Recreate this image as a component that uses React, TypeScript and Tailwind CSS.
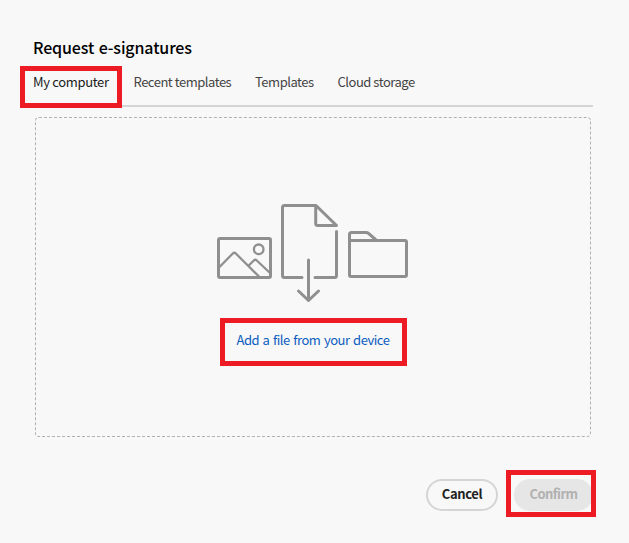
function Highlight({ className }: { className: string }) {
  return <span aria-hidden="true" className={`pointer-events-none absolute border-[5px] border-[#ed1c24] ${className}`} />;
}

function UploadArt() {
  return (
    <svg width="192" height="98" viewBox="217 204 192 98" fill="none" stroke="#8f8f8f" strokeWidth="3" strokeLinecap="round" strokeLinejoin="round">
      <rect x="218.5" y="238.5" width="52" height="39" rx="1.5" />
      <g strokeWidth="2.3">
        <circle cx="258.7" cy="249.3" r="4.8" />
        <path d="M219.5 267 L232.8 253.5 Q234.3 252 235.8 253.5 L259 276.5" />
        <path d="M249 265.3 L253.8 260.5 Q255.3 259 256.8 260.5 L270 273" />
      </g>
      <path d="M302 277.5 H284.5 Q282.5 277.5 282.5 275.5 V207.5 Q282.5 205.5 284.5 205.5 H316 L336.5 225.5 H318 Q315.7 225.5 315.7 223.5 V206" />
      <path d="M336.5 231.5 V275.5 Q336.5 277.5 334.5 277.5 H315" />
      <path d="M308.5 260 V300 M298.5 291 L308.5 300.5 L318.5 291" />
      <rect x="349.5" y="240.5" width="57" height="36" rx="1.5" />
      <path d="M349.5 241 V234.5 Q349.5 232.5 351.5 232.5 H366 Q367.5 232.5 368.5 233.4 L375.5 239.5" />
    </svg>
  );
}

export default function App() {
  return (
    <main className="flex h-[543px] w-[629px] flex-col bg-[#f8f8f8] pt-[35px] pr-9 pl-[33px] font-['Noto_Sans_CJK_SC',sans-serif] text-[13px] text-[#444]">
      <h1 className="h-6 text-[16px] leading-6 font-medium tracking-[-0.13px] [word-spacing:1px] whitespace-nowrap text-black">Request e-signatures</h1>
      <nav className="relative ml-px flex h-[48px] border-b-2 border-[#d5d5d5] pt-3 leading-[21px] tracking-[-0.48px] [word-spacing:1px] whitespace-nowrap">
        <button className="-ml-px h-[21px] w-[100px] text-left tracking-[-0.34px] text-[#1a1a1a]">My computer</button>
        <button className="h-[21px] w-[122px] pl-[0.5px] text-left">Recent templates</button>
        <button className="h-[21px] w-[82px] text-left">Templates</button>
        <button className="h-[21px] pl-[0.5px] text-left">Cloud storage</button>
        <Highlight className="top-[7px] -left-[14px] h-[42px] w-[102px]" />
      </nav>
      <section className="mt-[10px] mr-[2px] ml-[2px] flex h-80 flex-col items-center rounded border border-dashed border-[#b1b1b1] pt-[86px]">
        <UploadArt />
        <div className="relative mt-[16px] flex h-12 w-[187px] items-center justify-center pb-[5px]">
          <a className="tracking-[-0.46px] [word-spacing:1px] whitespace-nowrap text-[#0b5cc0]">Add a file from your device</a>
          <Highlight className="inset-0" />
        </div>
      </section>
      <footer className="mt-[42px] flex justify-end gap-4 font-bold">
        <button className="h-8 w-[72px] rounded-full border-2 border-[#d5d5d5] pb-0.5 tracking-[-0.4px] text-[#222]">Cancel</button>
        <div className="relative">
          <button disabled className="h-8 w-[79px] rounded-full bg-[#e6e6e6] pb-0.5 tracking-[-0.55px] text-[#b1b1b1]">Confirm</button>
          <Highlight className="-top-[9px] -left-2 h-[47px] w-[90px]" />
        </div>
      </footer>
    </main>
  );
}
